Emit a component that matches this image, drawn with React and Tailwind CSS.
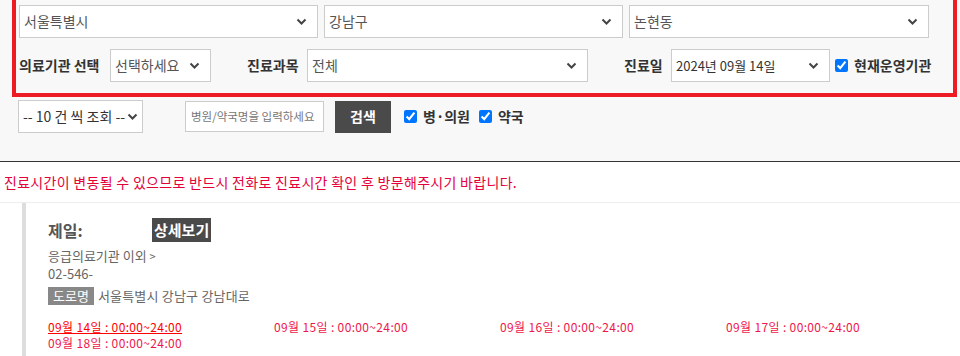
import React from 'react';

const FONT = '"Noto Sans CJK KR", "Noto Sans", sans-serif';

const Chevron = () => (
    <svg width="11" height="7" viewBox="0 0 11 7" className="shrink-0">
        <path d="M1.5 1.5 L5.5 5.5 L9.5 1.5" fill="none" stroke="#444" strokeWidth="2" />
    </svg>
);

const FakeSelect = ({ value, className }) => (
    <div className={`flex items-center justify-between bg-white border border-[#ccc] h-[33px] pl-[4px] pr-[10px] text-[14px] text-[#555] ${className}`}>
        <span className="truncate">{value}</span>
        <Chevron />
    </div>
);

const Check = ({ label }) => (
    <label className="flex items-center gap-[6px] text-[14px] font-bold text-[#333]">
        <input type="checkbox" defaultChecked className="w-[13px] h-[13px] m-0" />
        {label}
    </label>
);

const times = [
    '09월 14일 : 00:00~24:00',
    '09월 15일 : 00:00~24:00',
    '09월 16일 : 00:00~24:00',
    '09월 17일 : 00:00~24:00',
    '09월 18일 : 00:00~24:00',
];

export default function App() {
    return (
        <div className="w-[960px] h-[356px] overflow-hidden bg-white" style={{ fontFamily: FONT }}>
            <div className="bg-[#f8f8f8] h-[162px] border-b border-[#333]">
                {/* filter box */}
                <div className="ml-[12px] w-[945px] h-[97px] border-x-4 border-b-4 border-[#ed1c24] pl-[3px] pt-[5px]">
                    <div className="flex gap-[6px]">
                        <FakeSelect value="서울특별시" className="w-[299px]" />
                        <FakeSelect value="강남구" className="w-[299px]" />
                        <FakeSelect value="논현동" className="w-[300px]" />
                    </div>
                    <div className="flex items-center mt-[11px] h-[33px]">
                        <span className="text-[14px] font-bold text-[#333] w-[91px]">의료기관 선택</span>
                        <FakeSelect value="선택하세요" className="w-[101px]" />
                        <span className="text-[14px] font-bold text-[#333] ml-[36px] w-[60px]">진료과목</span>
                        <FakeSelect value="전체" className="w-[281px]" />
                        <span className="text-[14px] font-bold text-[#333] ml-[36px] w-[47px]">진료일</span>
                        <FakeSelect value="2024년 09월 14일" className="w-[159px] !text-[13px] !text-[#333]" />
                        <div className="ml-[5px]">
                            <Check label="현재운영기관" />
                        </div>
                    </div>
                </div>
                <div className="flex items-center pl-[18px] mt-[3px] h-[33px]">
                    <FakeSelect value="-- 10 건 씩 조회 --" className="w-[125px] !pr-[4px] !text-[14px] !text-[#333]" />
                    <div className="ml-[42px] w-[139px] h-[31px] bg-white border border-[#ccc] flex items-center pl-[5px] pr-[2px] text-[11.5px] text-[#777] whitespace-nowrap overflow-hidden">
                        병원/약국명을 입력하세요
                    </div>
                    <button className="ml-[11px] w-[56px] h-[32px] bg-[#4a4a4a] text-white text-[14px] font-bold">검색</button>
                    <div className="ml-[13px] flex items-center gap-[9px]">
                        <Check label="병·의원" />
                        <Check label="약국" />
                    </div>
                </div>
            </div>

            <div className="h-[41px] border-b border-[#eee] pl-[4px] pt-[11px] text-[14px] leading-[18px] tracking-[0.3px] text-[#e6003a]">
                진료시간이 변동될 수 있으므로 반드시 전화로 진료시간 확인 후 방문해주시기 바랍니다.
            </div>

            <div className="ml-[22px] border-l-4 border-[#ddd] pl-[22px] pt-[15px] h-[160px]">
                <div className="flex items-center h-[24px]">
                    <span className="text-[16px] font-bold text-[#555] w-[104px]">제일:</span>
                    <span className="bg-[#4a4a4a] text-white text-[15px] font-bold px-[2px] h-[24px] leading-[24px]">상세보기</span>
                </div>
                <div className="mt-[5px] text-[13px] leading-[17px] text-[#666]">응급의료기관 이외 <span className="text-[11px]">&gt;</span></div>
                <div className="text-[13px] leading-[17px] text-[#666]">02-546-</div>
                <div className="mt-[4px] flex items-center gap-[4px] text-[13px] text-[#666]">
                    <span className="bg-[#888] text-white px-[5px] h-[18px] leading-[18px]">도로명</span>
                    <span className="tracking-[0.2px]">서울특별시 강남구 강남대로</span>
                </div>
                <div className="mt-[13px] grid grid-cols-[226px_226px_226px_226px] text-[12px] leading-[16px] tracking-[0.35px] text-[#f0164a]">
                    {times.map((t, i) => (
                        <span key={i} className={i === 0 ? 'text-[#ff0000] underline' : ''}>{t}</span>
                    ))}
                </div>
            </div>
        </div>
    );
}
